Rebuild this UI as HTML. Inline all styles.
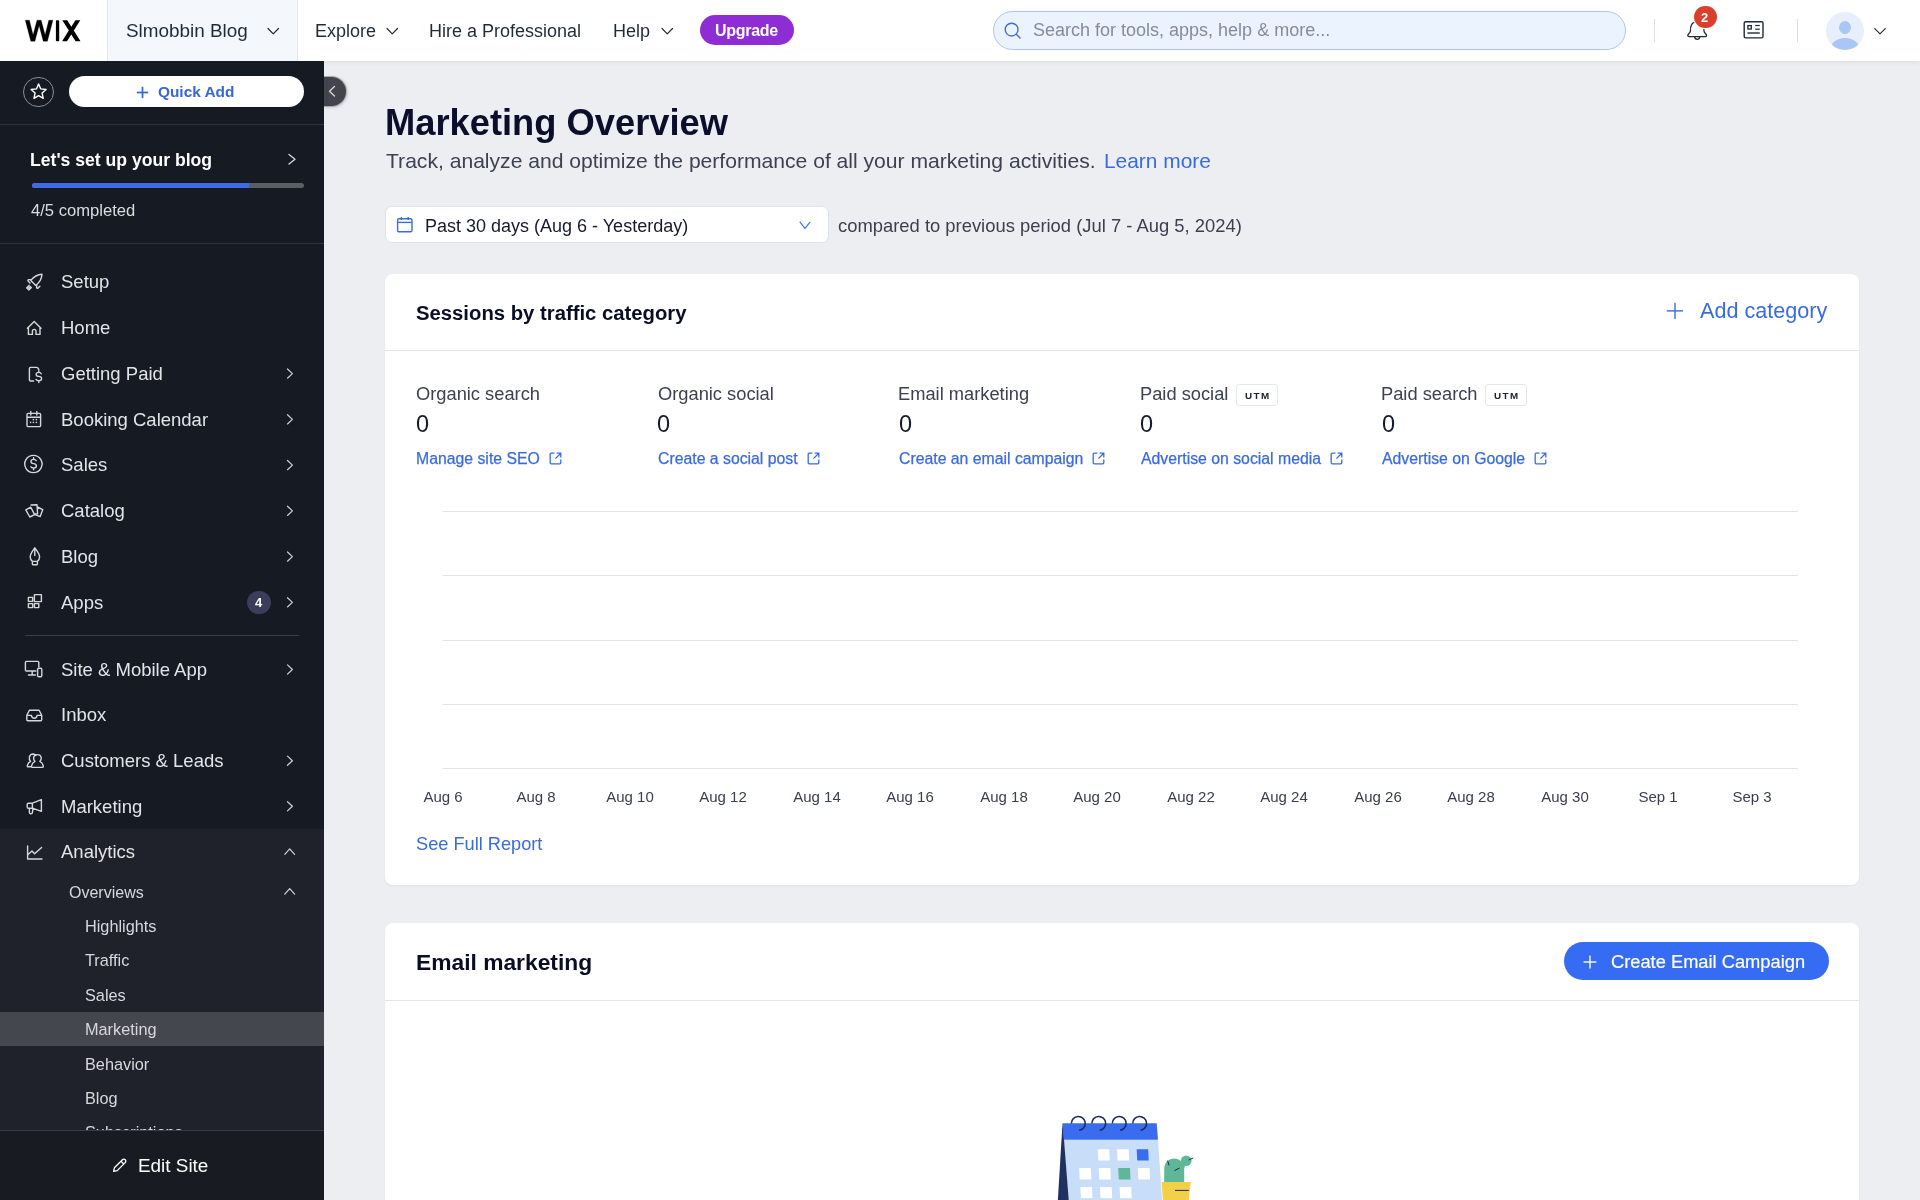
<!DOCTYPE html>
<html><head><meta charset="utf-8"><title>Marketing Overview</title>
<style>
html,body{margin:0;padding:0;width:1920px;height:1200px;overflow:hidden;background:#EDEEF2;font-family:"Liberation Sans", sans-serif;position:relative}
.t{position:absolute;line-height:1;white-space:nowrap;will-change:transform}
svg{display:block}
</style></head><body>
<div style="position:absolute;left:0px;top:0px;width:1920px;height:61px;background:#fff;box-shadow:0 1px 4px rgba(22,45,61,0.10);z-index:0"></div>
<svg style="position:absolute;left:0px;top:0px;overflow:visible;" width="1" height="1" viewBox="0 0 1 1"><path d="M25.3 20.2 L29.4 20.2 L33.1 35.0 L37.0 20.2 L41.2 20.2 L45.1 35.0 L48.8 20.2 L52.9 20.2 L47.4 41.2 L43.3 41.2 L39.1 25.6 L34.9 41.2 L30.8 41.2 Z" fill="#000" stroke="#000" stroke-width="0.3" stroke-linejoin="round"/>
<rect x="55.9" y="20.2" width="3.3" height="21" rx="0.8" fill="#000"/>
<path d="M62.3 20.2 L67.2 20.2 L71.3 26.7 L75.4 20.2 L80.3 20.2 L73.8 30.6 L80.5 41.2 L75.6 41.2 L71.3 34.5 L67.0 41.2 L62.1 41.2 L68.8 30.6 Z" fill="#000"/></svg>
<div style="position:absolute;left:107px;top:0px;width:191px;height:61px;background:#F4F7FC;border-left:1px solid #E3E6EC;border-right:1px solid #E3E6EC;box-sizing:border-box"></div>
<div class="t" style="left:126px;top:22px;font-size:18.9px;color:#1F2B37;font-weight:400;">Slmobbin Blog</div>
<svg style="position:absolute;left:0px;top:0px;overflow:visible;" width="1" height="1" viewBox="0 0 1 1"><polyline points="268,28.5 273.25,33.8 278.5,28.5" fill="none" stroke="#1F2B37" stroke-width="1.2" stroke-linecap="round" stroke-linejoin="round"/></svg>
<div class="t" style="left:315px;top:22px;font-size:18px;color:#1F2B37;font-weight:400;">Explore</div>
<svg style="position:absolute;left:0px;top:0px;overflow:visible;" width="1" height="1" viewBox="0 0 1 1"><polyline points="387,28.5 392.25,33.8 397.5,28.5" fill="none" stroke="#1F2B37" stroke-width="1.2" stroke-linecap="round" stroke-linejoin="round"/></svg>
<div class="t" style="left:429.4px;top:22px;font-size:18px;color:#1F2B37;font-weight:400;">Hire a Professional</div>
<div class="t" style="left:613px;top:22px;font-size:18px;color:#1F2B37;font-weight:400;">Help</div>
<svg style="position:absolute;left:0px;top:0px;overflow:visible;" width="1" height="1" viewBox="0 0 1 1"><polyline points="662,28.5 667.25,33.8 672.5,28.5" fill="none" stroke="#1F2B37" stroke-width="1.2" stroke-linecap="round" stroke-linejoin="round"/></svg>
<div style="position:absolute;left:700px;top:15.3px;width:94px;height:30.2px;background:#8E2DD3;border-radius:16px"></div>
<div class="t" style="left:715px;top:23px;font-size:16px;color:#fff;font-weight:700;letter-spacing:-0.3px">Upgrade</div>
<div style="position:absolute;left:993px;top:11px;width:633px;height:39px;background:#EAF3FE;border:1px solid #AFC5EE;border-radius:20px;box-sizing:border-box"></div>
<svg style="position:absolute;left:1004px;top:22px;overflow:visible;" width="18" height="18" viewBox="0 0 18 18"><circle cx="7.6" cy="7.6" r="6.4" fill="none" stroke="#3C6DDB" stroke-width="1.4"/><line x1="12.3" y1="12.3" x2="16" y2="16" stroke="#3C6DDB" stroke-width="1.4" stroke-linecap="round"/></svg>
<div class="t" style="left:1033px;top:21px;font-size:18px;color:#868AA0;font-weight:400;">Search for tools, apps, help &amp; more...</div>
<div style="position:absolute;left:1653.5px;top:19px;width:1.3px;height:23px;background:#DADDE3"></div>
<div style="position:absolute;left:1797px;top:19px;width:1.3px;height:23px;background:#DADDE3"></div>
<svg style="position:absolute;left:0px;top:0px;overflow:visible;" width="1" height="1" viewBox="0 0 1 1"><path d="M1690.4 31 C1690.4 29 1690.6 26.5 1691.4 25 C1692.6 22.8 1694.6 21.7 1697.2 21.7 C1699.8 21.7 1701.8 22.8 1703 25 C1703.8 26.5 1704 29 1704 31 C1704 33 1706.6 34 1706.6 35.6 C1706.6 36.3 1706.2 36.7 1705.5 36.7 H1688.9 C1688.2 36.7 1687.8 36.3 1687.8 35.6 C1687.8 34 1690.4 33 1690.4 31 Z" fill="none" stroke="#1F2B37" stroke-width="1.3" stroke-linejoin="round"/><path d="M1694.6 36.9 C1694.8 38.5 1695.8 39.3 1697.2 39.3 C1698.6 39.3 1699.6 38.5 1699.8 36.9" fill="none" stroke="#1F2B37" stroke-width="1.3"/></svg>
<div style="position:absolute;left:1694.3px;top:6px;width:22.4px;height:22.4px;background:#D8402D;border-radius:50%;box-shadow:0 0 0 1px #fff"></div>
<div class="t" style="left:1701.3px;top:11px;font-size:13px;color:#fff;font-weight:700;">2</div>
<svg style="position:absolute;left:0px;top:0px;overflow:visible;" width="1" height="1" viewBox="0 0 1 1"><rect x="1744.2" y="21.7" width="18.8" height="16.2" rx="1.4" fill="none" stroke="#1F2B37" stroke-width="1.4"/><rect x="1747.9" y="25.6" width="3.4" height="3.4" fill="none" stroke="#1F2B37" stroke-width="1.3"/><line x1="1755.2" y1="25.5" x2="1759.8" y2="25.5" stroke="#1F2B37" stroke-width="1.2"/><line x1="1755.2" y1="29.2" x2="1759.8" y2="29.2" stroke="#1F2B37" stroke-width="1.2"/><line x1="1747.4" y1="33" x2="1759.8" y2="33" stroke="#1F2B37" stroke-width="1.4"/></svg>
<div style="position:absolute;left:1826px;top:11.5px;width:38px;height:38px;border-radius:50%;background:#E7EEFC;overflow:hidden"><div style="position:absolute;left:13px;top:9.5px;width:12px;height:13px;border-radius:50%;background:#A9C6F4"></div><div style="position:absolute;left:5px;top:26px;width:28px;height:20px;border-radius:50%;background:#A9C6F4"></div></div>
<svg style="position:absolute;left:0px;top:0px;overflow:visible;" width="1" height="1" viewBox="0 0 1 1"><polyline points="1874.8,28.6 1880.0,33.9 1885.2,28.6" fill="none" stroke="#1F2B37" stroke-width="1.15" stroke-linecap="round" stroke-linejoin="round"/></svg>
<div style="position:absolute;left:0px;top:61px;width:324px;height:1139px;background:#161A23"></div>
<div style="position:absolute;left:23px;top:76.5px;width:30.5px;height:30.5px;border:1px solid #8A8D94;border-radius:50%;box-sizing:border-box"></div>
<svg style="position:absolute;left:0px;top:0px;overflow:visible;" width="1" height="1" viewBox="0 0 1 1"><path d="M38.60 84.00 L40.77 88.91 L46.11 89.46 L42.12 93.04 L43.24 98.29 L38.60 95.60 L33.96 98.29 L35.08 93.04 L31.09 89.46 L36.43 88.91 Z" fill="none" stroke="#fff" stroke-width="1.4" stroke-linejoin="round"/></svg>
<div style="position:absolute;left:68.5px;top:76px;width:235.5px;height:31px;background:#fff;border-radius:16px"></div>
<svg style="position:absolute;left:135.5px;top:85.6px;overflow:visible;" width="13" height="13" viewBox="0 0 13 13"><line x1="6.5" y1="0.8" x2="6.5" y2="12.2" stroke="#3766DC" stroke-width="1.7"/><line x1="0.8" y1="6.5" x2="12.2" y2="6.5" stroke="#3766DC" stroke-width="1.7"/></svg>
<div class="t" style="left:157.5px;top:84px;font-size:15.4px;color:#3766DC;font-weight:700;">Quick Add</div>
<div style="position:absolute;left:0px;top:123.5px;width:324px;height:1.1px;background:#2E3139"></div>
<div style="position:absolute;left:324px;top:75.5px;width:23.2px;height:31.4px;background:#44454C;border:1px solid rgba(255,255,255,0.55);border-left:0;box-sizing:border-box;border-radius:0 16px 16px 0;box-shadow:1px 1px 3px rgba(0,0,0,0.12)"></div>
<svg style="position:absolute;left:0px;top:0px;overflow:visible;" width="1" height="1" viewBox="0 0 1 1"><polyline points="334.5,86.5 329.5,91.25 334.5,96" fill="none" stroke="#D8DADE" stroke-width="1.3" stroke-linecap="round" stroke-linejoin="round"/></svg>
<div class="t" style="left:30px;top:152px;font-size:17.6px;color:#fff;font-weight:700;">Let's set up your blog</div>
<svg style="position:absolute;left:0px;top:0px;overflow:visible;" width="1" height="1" viewBox="0 0 1 1"><polyline points="289,154.5 295,159.25 289,164" fill="none" stroke="#D8DADE" stroke-width="1.3" stroke-linecap="round" stroke-linejoin="round"/></svg>
<div style="position:absolute;left:31.5px;top:183px;width:272.0px;height:5px;background:#5C5E66;border-radius:3px"></div>
<div style="position:absolute;left:31.5px;top:183px;width:217.0px;height:5px;background:#3D6BE6;border-radius:3px 0 0 3px"></div>
<div class="t" style="left:31px;top:203px;font-size:16.6px;color:#DADCE0;font-weight:400;">4/5 completed</div>
<div style="position:absolute;left:0px;top:242.5px;width:324px;height:1.1px;background:#2E3139"></div>
<svg style="position:absolute;left:0px;top:0px;overflow:visible;" width="1" height="1" viewBox="0 0 1 1"><rect x="32.699999999999996" y="418.90000000000003" width="1.4" height="1.4" fill="#D5D7DB"/><rect x="35.699999999999996" y="418.90000000000003" width="1.4" height="1.4" fill="#D5D7DB"/><rect x="29.900000000000002" y="421.7" width="1.4" height="1.4" fill="#D5D7DB"/><rect x="32.699999999999996" y="421.7" width="1.4" height="1.4" fill="#D5D7DB"/><rect x="35.699999999999996" y="421.7" width="1.4" height="1.4" fill="#D5D7DB"/></svg>
<svg style="position:absolute;left:0px;top:0px;overflow:visible;" width="1" height="1" viewBox="0 0 1 1"><path d="M42 274.2 C37.6 274.5 33.8 276.6 30.8 280.4 L35.8 285.4 C39.6 282.4 41.7 278.6 42 274.2 Z M31.8 279.4 L28.8 279.6 C28 279.7 27.6 280.5 28.1 281.1 L30 283 M36.8 284.4 L36.6 287.4 C36.6 288.2 37.4 288.6 38 288.1 L39.9 286.2 M26.6 287.9 L29.2 285.3 M27.7 289 L30.3 286.4 M28.8 290.1 L31.4 287.5" fill="none" stroke="#D5D7DB" stroke-width="1.4" stroke-linejoin="round" stroke-linecap="round"/></svg>
<div class="t" style="left:60.6px;top:273px;font-size:18.5px;color:#E2E4E8;font-weight:400;">Setup</div>
<svg style="position:absolute;left:0px;top:0px;overflow:visible;" width="1" height="1" viewBox="0 0 1 1"><path d="M27.4 328.2 L34.2 321.4 L41 328.2 M28.4 327.2 V334.4 H32.4 V331.2 Q32.4 329.4 34.2 329.4 Q36 329.4 36 331.2 V334.4 H40 V327.2" fill="none" stroke="#D5D7DB" stroke-width="1.4" stroke-linejoin="round" stroke-linecap="round"/></svg>
<div class="t" style="left:60.6px;top:319px;font-size:18.5px;color:#E2E4E8;font-weight:400;">Home</div>
<svg style="position:absolute;left:0px;top:0px;overflow:visible;" width="1" height="1" viewBox="0 0 1 1"><path d="M33.6 381 H30.6 Q29.4 381 29.4 379.8 V368.6 Q29.4 367.4 30.6 367.4 H36.6 Q37.4 367.4 38 368.2 L38.8 369.6 M41.2 373.8 Q40.6 372.4 38.8 372.4 Q36.2 372.4 36.2 374.4 Q36.2 376.2 38.8 376.4 Q41.6 376.6 41.6 378.6 Q41.6 380.8 38.8 380.8 Q36.8 380.8 36 379.4 M38.8 370.6 V372.4 M38.8 380.8 V382.6" fill="none" stroke="#D5D7DB" stroke-width="1.4" stroke-linejoin="round" stroke-linecap="round"/></svg>
<div class="t" style="left:60.6px;top:365px;font-size:18.5px;color:#E2E4E8;font-weight:400;">Getting Paid</div>
<svg style="position:absolute;left:0px;top:0px;overflow:visible;" width="1" height="1" viewBox="0 0 1 1"><polyline points="287.5,369.0 292.4,373.6 287.5,378.2" fill="none" stroke="#D0D2D6" stroke-width="1.2" stroke-linecap="round" stroke-linejoin="round"/></svg>
<svg style="position:absolute;left:0px;top:0px;overflow:visible;" width="1" height="1" viewBox="0 0 1 1"><path d="M28.2 413.4 H39.4 Q40.6 413.4 40.6 414.6 V425.4 Q40.6 426.6 39.4 426.6 H28.2 Q27 426.6 27 425.4 V414.6 Q27 413.4 28.2 413.4 Z M27 417.2 H40.6 M30.8 411.4 V415 M36.8 411.4 V415" fill="none" stroke="#D5D7DB" stroke-width="1.4" stroke-linejoin="round" stroke-linecap="round"/></svg>
<div class="t" style="left:60.6px;top:411px;font-size:18.5px;color:#E2E4E8;font-weight:400;">Booking Calendar</div>
<svg style="position:absolute;left:0px;top:0px;overflow:visible;" width="1" height="1" viewBox="0 0 1 1"><polyline points="287.5,414.75 292.4,419.35 287.5,423.95" fill="none" stroke="#D0D2D6" stroke-width="1.2" stroke-linecap="round" stroke-linejoin="round"/></svg>
<svg style="position:absolute;left:0px;top:0px;overflow:visible;" width="1" height="1" viewBox="0 0 1 1"><path d="M33.4 455.4 A8.6 8.6 0 1 1 33.39 455.4 Z M36.2 460.6 Q35.6 459.4 33.6 459.4 Q31 459.4 31 461.4 Q31 463.4 33.6 463.6 Q36.4 463.8 36.4 466 Q36.4 468 33.6 468 Q31.4 468 30.8 466.8 M33.6 457.6 V459.4 M33.6 468 V469.8" fill="none" stroke="#D5D7DB" stroke-width="1.4" stroke-linejoin="round" stroke-linecap="round"/></svg>
<div class="t" style="left:60.6px;top:456px;font-size:18.5px;color:#E2E4E8;font-weight:400;">Sales</div>
<svg style="position:absolute;left:0px;top:0px;overflow:visible;" width="1" height="1" viewBox="0 0 1 1"><polyline points="287.5,460.5 292.4,465.1 287.5,469.7" fill="none" stroke="#D0D2D6" stroke-width="1.2" stroke-linecap="round" stroke-linejoin="round"/></svg>
<svg style="position:absolute;left:0px;top:0px;overflow:visible;" width="1" height="1" viewBox="0 0 1 1"><path d="M25.8 509.8 L30.8 507.2 L34.6 514.6 L29.8 517 Z M31 505 L37 504.8 L37.6 513.8 L34.4 514 M37.4 507 L42.8 509.6 L40.2 516.6 L35 514.6" fill="none" stroke="#D5D7DB" stroke-width="1.4" stroke-linejoin="round" stroke-linecap="round"/></svg>
<div class="t" style="left:60.6px;top:502px;font-size:18.5px;color:#E2E4E8;font-weight:400;">Catalog</div>
<svg style="position:absolute;left:0px;top:0px;overflow:visible;" width="1" height="1" viewBox="0 0 1 1"><polyline points="287.5,506.25 292.4,510.84999999999997 287.5,515.4499999999999" fill="none" stroke="#D0D2D6" stroke-width="1.2" stroke-linecap="round" stroke-linejoin="round"/></svg>
<svg style="position:absolute;left:0px;top:0px;overflow:visible;" width="1" height="1" viewBox="0 0 1 1"><path d="M34.8 547.8 C36.6 550.6 39.6 553.6 39.6 557 C39.6 558.8 38.6 560.4 37.4 561.4 H32.4 C31.2 560.4 30.2 558.8 30.2 557 C30.2 553.6 33 550.6 34.8 547.8 Z M34.8 548.6 V555.6 M32.6 561.6 Q31.8 564.8 33.2 564.8 H36.6 Q38 564.8 37.2 561.6" fill="none" stroke="#D5D7DB" stroke-width="1.4" stroke-linejoin="round" stroke-linecap="round"/></svg>
<div class="t" style="left:60.6px;top:548px;font-size:18.5px;color:#E2E4E8;font-weight:400;">Blog</div>
<svg style="position:absolute;left:0px;top:0px;overflow:visible;" width="1" height="1" viewBox="0 0 1 1"><polyline points="287.5,552.0 292.4,556.5999999999999 287.5,561.1999999999999" fill="none" stroke="#D0D2D6" stroke-width="1.2" stroke-linecap="round" stroke-linejoin="round"/></svg>
<svg style="position:absolute;left:0px;top:0px;overflow:visible;" width="1" height="1" viewBox="0 0 1 1"><path d="M28.4 597.4 H32.6 V601.4 H28.4 Z M28.4 603.6 H32.6 V607.6 H28.4 Z M34.4 603.6 H38.8 V607.6 H34.4 Z M34.4 594.6 H41.4 V601.6 H34.4 Z" fill="none" stroke="#D5D7DB" stroke-width="1.4" stroke-linejoin="round" stroke-linecap="round"/></svg>
<div class="t" style="left:60.6px;top:594px;font-size:18.5px;color:#E2E4E8;font-weight:400;">Apps</div>
<svg style="position:absolute;left:0px;top:0px;overflow:visible;" width="1" height="1" viewBox="0 0 1 1"><polyline points="287.5,597.75 292.4,602.3499999999999 287.5,606.9499999999999" fill="none" stroke="#D0D2D6" stroke-width="1.2" stroke-linecap="round" stroke-linejoin="round"/></svg>
<div style="position:absolute;left:247px;top:590.5px;width:23.5px;height:23.0px;background:#3A3E5A;border-radius:50%"></div>
<div class="t" style="left:254.8px;top:596px;font-size:13px;color:#fff;font-weight:700;">4</div>
<div style="position:absolute;left:25px;top:634.8px;width:273.5px;height:1.1px;background:#3A3D45"></div>
<svg style="position:absolute;left:0px;top:0px;overflow:visible;" width="1" height="1" viewBox="0 0 1 1"><path d="M38.8 666.8 V662.4 Q38.8 661.4 37.8 661.4 H26.4 Q25.4 661.4 25.4 662.4 V670 Q25.4 671 26.4 671 H35.8 M32.2 671 V675 M28.4 675 H35.4 M38.8 668.2 H40.6 Q41.8 668.2 41.8 669.4 V675.6 Q41.8 676.8 40.6 676.8 H38.8 Q37.6 676.8 37.6 675.6 V669.4 Q37.6 668.2 38.8 668.2 Z" fill="none" stroke="#D5D7DB" stroke-width="1.4" stroke-linejoin="round" stroke-linecap="round"/></svg>
<div class="t" style="left:60.6px;top:661px;font-size:18.5px;color:#E2E4E8;font-weight:400;">Site &amp; Mobile App</div>
<svg style="position:absolute;left:0px;top:0px;overflow:visible;" width="1" height="1" viewBox="0 0 1 1"><polyline points="287.5,664.9 292.4,669.5 287.5,674.0999999999999" fill="none" stroke="#D0D2D6" stroke-width="1.2" stroke-linecap="round" stroke-linejoin="round"/></svg>
<svg style="position:absolute;left:0px;top:0px;overflow:visible;" width="1" height="1" viewBox="0 0 1 1"><path d="M26.8 715.2 L29.4 710.2 H39.1 L41.7 715.2 V719.8 Q41.7 720.8 40.7 720.8 H27.8 Q26.8 720.8 26.8 719.8 Z M26.8 715.4 H31.4 Q31.8 718.2 34.25 718.2 Q36.7 718.2 37.1 715.4 H41.7" fill="none" stroke="#D5D7DB" stroke-width="1.4" stroke-linejoin="round" stroke-linecap="round"/></svg>
<div class="t" style="left:60.6px;top:706px;font-size:18.5px;color:#E2E4E8;font-weight:400;">Inbox</div>
<svg style="position:absolute;left:0px;top:0px;overflow:visible;" width="1" height="1" viewBox="0 0 1 1"><path d="M30.4 766.8 H28.2 Q27 766.8 27.3 765.6 Q28 762.6 30.6 761.4 Q28.8 759.8 29.4 757 Q30.2 754 33 754 Q35 754.2 35.8 755.6 M35 761.4 Q33.2 759.8 33.6 757.4 Q34.2 754.6 37.4 754.6 Q40.6 754.6 41.2 757.4 Q41.6 759.8 39.8 761.4 Q42.6 762.6 43.3 765.8 Q43.5 767.4 42.2 767.4 H32.6 Q31.3 767.4 31.5 765.8 Q32.2 762.6 35 761.4 Z" fill="none" stroke="#D5D7DB" stroke-width="1.4" stroke-linejoin="round" stroke-linecap="round"/></svg>
<div class="t" style="left:60.6px;top:752px;font-size:18.5px;color:#E2E4E8;font-weight:400;">Customers &amp; Leads</div>
<svg style="position:absolute;left:0px;top:0px;overflow:visible;" width="1" height="1" viewBox="0 0 1 1"><polyline points="287.5,756.1 292.4,760.7 287.5,765.3" fill="none" stroke="#D0D2D6" stroke-width="1.2" stroke-linecap="round" stroke-linejoin="round"/></svg>
<svg style="position:absolute;left:0px;top:0px;overflow:visible;" width="1" height="1" viewBox="0 0 1 1"><path d="M32.4 803.2 L41.4 799.6 V811.4 L32.4 808.2 Z M32.4 803.2 H28.4 Q27.2 803.2 27.2 804.4 V807 Q27.2 808.2 28.4 808.2 H32.4 M29.4 808.2 V812.4 Q29.4 813.8 30.9 813.8 Q32.4 813.8 32.4 812.4 L33 808.6" fill="none" stroke="#D5D7DB" stroke-width="1.4" stroke-linejoin="round" stroke-linecap="round"/></svg>
<div class="t" style="left:60.6px;top:798px;font-size:18.5px;color:#E2E4E8;font-weight:400;">Marketing</div>
<svg style="position:absolute;left:0px;top:0px;overflow:visible;" width="1" height="1" viewBox="0 0 1 1"><polyline points="287.5,801.6999999999999 292.4,806.3 287.5,810.8999999999999" fill="none" stroke="#D0D2D6" stroke-width="1.2" stroke-linecap="round" stroke-linejoin="round"/></svg>
<div style="position:absolute;left:0px;top:829px;width:324px;height:301px;background:#1F222B"></div>
<svg style="position:absolute;left:0px;top:0px;overflow:visible;" width="1" height="1" viewBox="0 0 1 1"><path d="M27.6 846 V859 H42 M27.8 854.8 L32 851 L34.6 853.8 L41.6 847.4" fill="none" stroke="#D5D7DB" stroke-width="1.4" stroke-linejoin="round" stroke-linecap="round"/></svg>
<div class="t" style="left:60.6px;top:843px;font-size:18.5px;color:#E2E4E8;font-weight:400;">Analytics</div>
<svg style="position:absolute;left:0px;top:0px;overflow:visible;" width="1" height="1" viewBox="0 0 1 1"><polyline points="284.8,854.4 289.70000000000005,848.8 294.6,854.4" fill="none" stroke="#D0D2D6" stroke-width="1.2" stroke-linecap="round" stroke-linejoin="round"/></svg>
<div class="t" style="left:69px;top:885px;font-size:16px;color:#D6D8DC;font-weight:400;">Overviews</div>
<svg style="position:absolute;left:0px;top:0px;overflow:visible;" width="1" height="1" viewBox="0 0 1 1"><polyline points="284.8,894.2 289.70000000000005,888.6 294.6,894.2" fill="none" stroke="#D0D2D6" stroke-width="1.2" stroke-linecap="round" stroke-linejoin="round"/></svg>
<div style="position:absolute;left:0px;top:1012px;width:324px;height:34.3px;background:#45474E"></div>
<div class="t" style="left:85.2px;top:918px;font-size:16.3px;color:#D6D8DC;font-weight:400;">Highlights</div>
<div class="t" style="left:85.2px;top:952px;font-size:16.3px;color:#D6D8DC;font-weight:400;">Traffic</div>
<div class="t" style="left:85.2px;top:987px;font-size:16.3px;color:#D6D8DC;font-weight:400;">Sales</div>
<div class="t" style="left:85.2px;top:1021px;font-size:16.3px;color:#D6D8DC;font-weight:400;">Marketing</div>
<div class="t" style="left:85.2px;top:1056px;font-size:16.3px;color:#D6D8DC;font-weight:400;">Behavior</div>
<div class="t" style="left:85.2px;top:1090px;font-size:16.3px;color:#D6D8DC;font-weight:400;">Blog</div>
<div class="t" style="left:85.2px;top:1124px;font-size:16.3px;color:#D6D8DC;font-weight:400;">Subscriptions</div>
<div style="position:absolute;left:0px;top:1129.5px;width:324px;height:1.5px;background:#3A3D45"></div>
<div style="position:absolute;left:0px;top:1131px;width:324px;height:69px;background:#181B22"></div>
<svg style="position:absolute;left:111px;top:1157px;overflow:visible;" width="17" height="17" viewBox="0 0 17 17"><path d="M2.6 14.4 L3.4 10.8 L11.4 2.8 C12.2 2 13.4 2 14.2 2.8 C15 3.6 15 4.8 14.2 5.6 L6.2 13.6 Z" fill="none" stroke="#fff" stroke-width="1.3" stroke-linejoin="round"/><line x1="10" y1="4.2" x2="12.8" y2="7" stroke="#fff" stroke-width="1.3"/></svg>
<div class="t" style="left:138px;top:1157px;font-size:18.9px;color:#fff;font-weight:400;">Edit Site</div>
<div class="t" style="left:385px;top:105px;font-size:36.3px;color:#0B0F2C;font-weight:700;">Marketing Overview</div>
<div class="t" style="left:386px;top:150px;font-size:21.1px;color:#3D4152;font-weight:400;">Track, analyze and optimize the performance of all your marketing activities.</div>
<div class="t" style="left:1104px;top:151px;font-size:20.9px;color:#3A6BDD;font-weight:400;">Learn more</div>
<div style="position:absolute;left:385px;top:205.5px;width:443.5px;height:37.5px;background:#fff;border:1px solid #DDE3ED;border-radius:7px;box-sizing:border-box"></div>
<svg style="position:absolute;left:396px;top:216px;overflow:visible;" width="18" height="18" viewBox="0 0 18 18"><rect x="1.6" y="2.8" width="14.4" height="13" rx="1.4" fill="none" stroke="#3C6DDB" stroke-width="1.4"/><line x1="1.6" y1="6.4" x2="16" y2="6.4" stroke="#3C6DDB" stroke-width="1.4"/><line x1="5.4" y1="1" x2="5.4" y2="4" stroke="#3C6DDB" stroke-width="1.4"/><line x1="12.2" y1="1" x2="12.2" y2="4" stroke="#3C6DDB" stroke-width="1.4"/></svg>
<div class="t" style="left:425px;top:217px;font-size:18px;color:#151A2E;font-weight:400;">Past 30 days (Aug 6 - Yesterday)</div>
<svg style="position:absolute;left:0px;top:0px;overflow:visible;" width="1" height="1" viewBox="0 0 1 1"><polyline points="800,222.2 805.0,228.3 810,222.2" fill="none" stroke="#4272DE" stroke-width="1.15" stroke-linecap="round" stroke-linejoin="round"/></svg>
<div class="t" style="left:837.6px;top:217px;font-size:18.4px;color:#3B3F4E;font-weight:400;">compared to previous period (Jul 7 - Aug 5, 2024)</div>
<div style="position:absolute;left:385px;top:274px;width:1474px;height:611px;background:#fff;border-radius:8px;box-shadow:0 1px 2px rgba(22,45,61,0.06)"></div>
<div class="t" style="left:416px;top:303px;font-size:20.3px;color:#0A0D26;font-weight:700;">Sessions by traffic category</div>
<svg style="position:absolute;left:1666px;top:301.5px;overflow:visible;" width="18" height="18" viewBox="0 0 18 18"><line x1="9" y1="0.8" x2="9" y2="17" stroke="#3A6BDD" stroke-width="1.4"/><line x1="0.8" y1="8.9" x2="17" y2="8.9" stroke="#3A6BDD" stroke-width="1.4"/></svg>
<div class="t" style="left:1699.5px;top:300px;font-size:21.6px;color:#3A6BDD;font-weight:400;">Add category</div>
<div style="position:absolute;left:385px;top:350px;width:1474px;height:1.2px;background:#E4E6EA"></div>
<div class="t" style="left:416.0px;top:385px;font-size:18.3px;color:#3D4152;font-weight:400;">Organic search</div>
<div class="t" style="left:415.7px;top:413px;font-size:23.5px;color:#151A2E;font-weight:400;">0</div>
<div class="t" style="left:416.0px;top:451px;font-size:15.8px;color:#3A6BDD;font-weight:400;-webkit-text-stroke:0.25px #3A6BDD">Manage site SEO<svg width="13" height="13" viewBox="0 0 13 13" style="display:inline-block;margin-left:9px;vertical-align:-1px"><path d="M5.4 1.2 H2.2 C1.6 1.2 1.2 1.6 1.2 2.2 V10.8 C1.2 11.4 1.6 11.8 2.2 11.8 H10.8 C11.4 11.8 11.8 11.4 11.8 10.8 V7.6" fill="none" stroke="#3A6BDD" stroke-width="1.3"/><path d="M7.6 1.2 H11.8 V5.4 M11.8 1.2 L6.4 6.6" fill="none" stroke="#3A6BDD" stroke-width="1.3"/></svg></div>
<div class="t" style="left:657.5px;top:385px;font-size:18.3px;color:#3D4152;font-weight:400;">Organic social</div>
<div class="t" style="left:657.2px;top:413px;font-size:23.5px;color:#151A2E;font-weight:400;">0</div>
<div class="t" style="left:657.5px;top:451px;font-size:15.8px;color:#3A6BDD;font-weight:400;-webkit-text-stroke:0.25px #3A6BDD">Create a social post<svg width="13" height="13" viewBox="0 0 13 13" style="display:inline-block;margin-left:9px;vertical-align:-1px"><path d="M5.4 1.2 H2.2 C1.6 1.2 1.2 1.6 1.2 2.2 V10.8 C1.2 11.4 1.6 11.8 2.2 11.8 H10.8 C11.4 11.8 11.8 11.4 11.8 10.8 V7.6" fill="none" stroke="#3A6BDD" stroke-width="1.3"/><path d="M7.6 1.2 H11.8 V5.4 M11.8 1.2 L6.4 6.6" fill="none" stroke="#3A6BDD" stroke-width="1.3"/></svg></div>
<div class="t" style="left:898.0px;top:385px;font-size:18.3px;color:#3D4152;font-weight:400;">Email marketing</div>
<div class="t" style="left:898.7px;top:413px;font-size:23.5px;color:#151A2E;font-weight:400;">0</div>
<div class="t" style="left:899.0px;top:451px;font-size:15.8px;color:#3A6BDD;font-weight:400;-webkit-text-stroke:0.25px #3A6BDD">Create an email campaign<svg width="13" height="13" viewBox="0 0 13 13" style="display:inline-block;margin-left:9px;vertical-align:-1px"><path d="M5.4 1.2 H2.2 C1.6 1.2 1.2 1.6 1.2 2.2 V10.8 C1.2 11.4 1.6 11.8 2.2 11.8 H10.8 C11.4 11.8 11.8 11.4 11.8 10.8 V7.6" fill="none" stroke="#3A6BDD" stroke-width="1.3"/><path d="M7.6 1.2 H11.8 V5.4 M11.8 1.2 L6.4 6.6" fill="none" stroke="#3A6BDD" stroke-width="1.3"/></svg></div>
<div class="t" style="left:1139.5px;top:385px;font-size:18.3px;color:#3D4152;font-weight:400;">Paid social</div>
<div class="t" style="left:1140.2px;top:413px;font-size:23.5px;color:#151A2E;font-weight:400;">0</div>
<div class="t" style="left:1140.5px;top:451px;font-size:15.8px;color:#3A6BDD;font-weight:400;-webkit-text-stroke:0.25px #3A6BDD">Advertise on social media<svg width="13" height="13" viewBox="0 0 13 13" style="display:inline-block;margin-left:9px;vertical-align:-1px"><path d="M5.4 1.2 H2.2 C1.6 1.2 1.2 1.6 1.2 2.2 V10.8 C1.2 11.4 1.6 11.8 2.2 11.8 H10.8 C11.4 11.8 11.8 11.4 11.8 10.8 V7.6" fill="none" stroke="#3A6BDD" stroke-width="1.3"/><path d="M7.6 1.2 H11.8 V5.4 M11.8 1.2 L6.4 6.6" fill="none" stroke="#3A6BDD" stroke-width="1.3"/></svg></div>
<div style="position:absolute;left:1236.2px;top:384.3px;width:41.6px;height:22.0px;border:1px solid #E6E8EC;border-radius:3px;box-sizing:border-box"></div>
<div class="t" style="left:1244.5px;top:391px;font-size:9.8px;color:#20242F;font-weight:700;letter-spacing:1.45px">UTM</div>
<div class="t" style="left:1381.0px;top:385px;font-size:18.3px;color:#3D4152;font-weight:400;">Paid search</div>
<div class="t" style="left:1381.7px;top:413px;font-size:23.5px;color:#151A2E;font-weight:400;">0</div>
<div class="t" style="left:1382.0px;top:451px;font-size:15.8px;color:#3A6BDD;font-weight:400;-webkit-text-stroke:0.25px #3A6BDD">Advertise on Google<svg width="13" height="13" viewBox="0 0 13 13" style="display:inline-block;margin-left:9px;vertical-align:-1px"><path d="M5.4 1.2 H2.2 C1.6 1.2 1.2 1.6 1.2 2.2 V10.8 C1.2 11.4 1.6 11.8 2.2 11.8 H10.8 C11.4 11.8 11.8 11.4 11.8 10.8 V7.6" fill="none" stroke="#3A6BDD" stroke-width="1.3"/><path d="M7.6 1.2 H11.8 V5.4 M11.8 1.2 L6.4 6.6" fill="none" stroke="#3A6BDD" stroke-width="1.3"/></svg></div>
<div style="position:absolute;left:1485.2px;top:384.3px;width:41.6px;height:22.0px;border:1px solid #E6E8EC;border-radius:3px;box-sizing:border-box"></div>
<div class="t" style="left:1493.5px;top:391px;font-size:9.8px;color:#20242F;font-weight:700;letter-spacing:1.45px">UTM</div>
<div style="position:absolute;left:443px;top:511px;width:1355px;height:1px;background:#E1E3E7"></div>
<div style="position:absolute;left:443px;top:575px;width:1355px;height:1px;background:#E1E3E7"></div>
<div style="position:absolute;left:443px;top:640px;width:1355px;height:1px;background:#E1E3E7"></div>
<div style="position:absolute;left:443px;top:704px;width:1355px;height:1px;background:#E1E3E7"></div>
<div style="position:absolute;left:443px;top:768px;width:1355px;height:1px;background:#E1E3E7"></div>
<div class="t" style="left:383.0px;top:789px;font-size:15px;color:#3A3E4C;font-weight:400;width:120px;text-align:center">Aug 6</div>
<div class="t" style="left:476.47px;top:789px;font-size:15px;color:#3A3E4C;font-weight:400;width:120px;text-align:center">Aug 8</div>
<div class="t" style="left:569.94px;top:789px;font-size:15px;color:#3A3E4C;font-weight:400;width:120px;text-align:center">Aug 10</div>
<div class="t" style="left:663.41px;top:789px;font-size:15px;color:#3A3E4C;font-weight:400;width:120px;text-align:center">Aug 12</div>
<div class="t" style="left:756.88px;top:789px;font-size:15px;color:#3A3E4C;font-weight:400;width:120px;text-align:center">Aug 14</div>
<div class="t" style="left:850.35px;top:789px;font-size:15px;color:#3A3E4C;font-weight:400;width:120px;text-align:center">Aug 16</div>
<div class="t" style="left:943.82px;top:789px;font-size:15px;color:#3A3E4C;font-weight:400;width:120px;text-align:center">Aug 18</div>
<div class="t" style="left:1037.29px;top:789px;font-size:15px;color:#3A3E4C;font-weight:400;width:120px;text-align:center">Aug 20</div>
<div class="t" style="left:1130.76px;top:789px;font-size:15px;color:#3A3E4C;font-weight:400;width:120px;text-align:center">Aug 22</div>
<div class="t" style="left:1224.23px;top:789px;font-size:15px;color:#3A3E4C;font-weight:400;width:120px;text-align:center">Aug 24</div>
<div class="t" style="left:1317.7px;top:789px;font-size:15px;color:#3A3E4C;font-weight:400;width:120px;text-align:center">Aug 26</div>
<div class="t" style="left:1411.17px;top:789px;font-size:15px;color:#3A3E4C;font-weight:400;width:120px;text-align:center">Aug 28</div>
<div class="t" style="left:1504.64px;top:789px;font-size:15px;color:#3A3E4C;font-weight:400;width:120px;text-align:center">Aug 30</div>
<div class="t" style="left:1598.11px;top:789px;font-size:15px;color:#3A3E4C;font-weight:400;width:120px;text-align:center">Sep 1</div>
<div class="t" style="left:1691.58px;top:789px;font-size:15px;color:#3A3E4C;font-weight:400;width:120px;text-align:center">Sep 3</div>
<div class="t" style="left:416px;top:835px;font-size:18.2px;color:#3A6BDD;font-weight:400;">See Full Report</div>
<div style="position:absolute;left:385px;top:923px;width:1474px;height:337px;background:#fff;border-radius:8px;box-shadow:0 1px 2px rgba(22,45,61,0.06)"></div>
<div class="t" style="left:416px;top:951px;font-size:22.8px;color:#0A0D26;font-weight:700;">Email marketing</div>
<div style="position:absolute;left:1564px;top:942px;width:264.5px;height:38px;background:#356CF3;border-radius:19px"></div>
<svg style="position:absolute;left:1583px;top:954.5px;overflow:visible;" width="14" height="14" viewBox="0 0 14 14"><line x1="7" y1="0.6" x2="7" y2="13.4" stroke="#fff" stroke-width="1.4"/><line x1="0.6" y1="7" x2="13.4" y2="7" stroke="#fff" stroke-width="1.4"/></svg>
<div class="t" style="left:1610.6px;top:953px;font-size:18.3px;color:#fff;font-weight:400;-webkit-text-stroke:0.2px #fff">Create Email Campaign</div>
<div style="position:absolute;left:385px;top:999.5px;width:1474px;height:1.2px;background:#E4E6EA"></div>
<svg style="position:absolute;left:1050px;top:1105px;overflow:visible;" width="160" height="95" viewBox="0 0 160 95">
<path d="M13.75 34.8 L108 34.8 L112.2 96 L18.6 96 Z" fill="#C8DDF7"/>
<path d="M12.5 18.2 L106.7 18.2 L108 34.8 L13.8 34.8 Z" fill="#3A6CF0"/>
<path d="M12.5 18.2 L14 34.8 L18.8 96 L7.8 96 Z" fill="#1F3160"/>
<path d="M47.9 44.2 L59.2 44.2 L59.7 55.4 L48.4 55.4 Z" fill="#fff"/><path d="M67 44.2 L78.7 44.2 L79.2 55.4 L67.5 55.4 Z" fill="#fff"/><path d="M86.7 44.2 L98.2 44.2 L98.7 55.4 L87.2 55.4 Z" fill="#3A6CF0"/><path d="M29.2 62.9 L40.8 62.9 L41.3 74.6 L29.7 74.6 Z" fill="#fff"/><path d="M48.7 62.9 L60.4 62.9 L60.9 74.6 L49.2 74.6 Z" fill="#fff"/><path d="M68.3 62.9 L80 62.9 L80.5 74.6 L68.8 74.6 Z" fill="#5EB897"/><path d="M87.9 62.9 L99.6 62.9 L100.1 74.6 L88.4 74.6 Z" fill="#fff"/><path d="M30.4 82 L42 82 L42.5 93.3 L30.9 93.3 Z" fill="#fff"/><path d="M50 82 L61.7 82 L62.2 93.3 L50.5 93.3 Z" fill="#fff"/><path d="M69.6 82 L81.2 82 L81.7 93.3 L70.1 93.3 Z" fill="#fff"/>
<path d="M21.40 18.40 A6.9 6.9 0 1 1 29.20 25.20" fill="none" stroke="#1B2B57" stroke-width="1.5"/><path d="M41.85 18.40 A6.9 6.9 0 1 1 49.65 25.20" fill="none" stroke="#1B2B57" stroke-width="1.5"/><path d="M62.30 18.40 A6.9 6.9 0 1 1 70.10 25.20" fill="none" stroke="#1B2B57" stroke-width="1.5"/><path d="M82.70 18.40 A6.9 6.9 0 1 1 90.50 25.20" fill="none" stroke="#1B2B57" stroke-width="1.5"/>
<path d="M114.2 77.5 V64 C114.2 50 134.2 50 134.2 64 V77.5 Z" fill="#5EB897"/>
<circle cx="136.2" cy="55.8" r="5.3" fill="#5EB897"/><path d="M128 60 L132.5 57 L135 61 L133.2 66 L128.5 66 Z" fill="#5EB897"/>
<line x1="117.6" y1="55.6" x2="119" y2="60.4" stroke="#1B2B57" stroke-width="1"/>
<line x1="124.4" y1="65.6" x2="129.6" y2="63" stroke="#1B2B57" stroke-width="1"/>
<line x1="138.6" y1="55" x2="143.2" y2="53" stroke="#1B2B57" stroke-width="1"/>
<path d="M111.6 77 L140.8 77 L138.6 96 L113 96 Z" fill="#F4CF48"/>
<line x1="125" y1="85.4" x2="138.8" y2="85.4" stroke="#1B2B57" stroke-width="1"/>
</svg>
</body></html>
